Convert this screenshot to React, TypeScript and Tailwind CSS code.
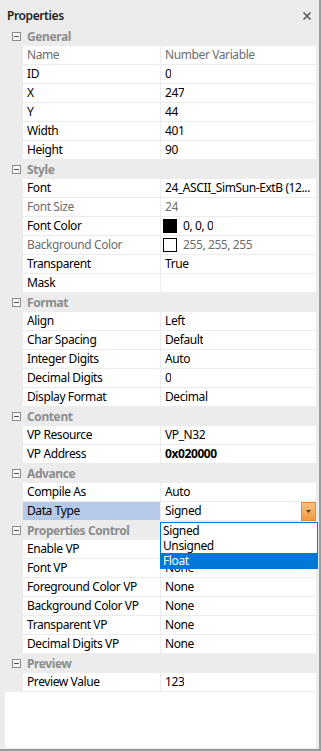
import { FC } from "react";

type Row = {
  n: string;
  v: string;
  dim?: boolean;
  bold?: boolean;
  swatch?: "black" | "white";
  selected?: boolean;
};

type Section = { title: string; rows: Row[] };

const sections: Section[] = [
  {
    title: "General",
    rows: [
      { n: "Name", v: "Number Variable", dim: true },
      { n: "ID", v: "0" },
      { n: "X", v: "247" },
      { n: "Y", v: "44" },
      { n: "Width", v: "401" },
      { n: "Height", v: "90" },
    ],
  },
  {
    title: "Style",
    rows: [
      { n: "Font", v: "24_ASCII_SimSun-ExtB (12..." },
      { n: "Font Size", v: "24", dim: true },
      { n: "Font Color", v: "0, 0, 0", swatch: "black" },
      { n: "Background Color", v: "255, 255, 255", dim: true, swatch: "white" },
      { n: "Transparent", v: "True" },
      { n: "Mask", v: "" },
    ],
  },
  {
    title: "Format",
    rows: [
      { n: "Align", v: "Left" },
      { n: "Char Spacing", v: "Default" },
      { n: "Integer Digits", v: "Auto" },
      { n: "Decimal Digits", v: "0" },
      { n: "Display Format", v: "Decimal" },
    ],
  },
  {
    title: "Content",
    rows: [
      { n: "VP Resource", v: "VP_N32" },
      { n: "VP Address", v: "0x020000", bold: true },
    ],
  },
  {
    title: "Advance",
    rows: [
      { n: "Compile As", v: "Auto" },
      { n: "Data Type", v: "Signed", selected: true },
    ],
  },
  {
    title: "Properties Control",
    rows: [
      { n: "Enable VP", v: "None" },
      { n: "Font VP", v: "None" },
      { n: "Foreground Color VP", v: "None" },
      { n: "Background Color VP", v: "None" },
      { n: "Transparent VP", v: "None" },
      { n: "Decimal Digits VP", v: "None" },
    ],
  },
  {
    title: "Preview",
    rows: [{ n: "Preview Value", v: "123" }],
  },
];

const Collapse: FC = () => (
  <svg width="9" height="9" viewBox="0 0 9 9">
    <rect x="0.5" y="0.5" width="8" height="8" fill="#f7f7f7" stroke="#8c8c8c" />
    <line x1="2" y1="4.5" x2="7" y2="4.5" stroke="#555" />
  </svg>
);

const DropList: FC = () => (
  <div className="absolute left-[-1px] top-[20px] z-10 w-[158px] border border-[#0078d7] bg-white text-black leading-[15px]">
    <div className="pl-[2px] h-[15px]">Signed</div>
    <div className="pl-[2px] h-[15px]">Unsigned</div>
    <div className="pl-[2px] h-[15px] bg-[#0078d7] text-white">Float</div>
  </div>
);

const PropRow: FC<Row> = (r) => {
  const tone = r.dim ? "text-[#6d6d6d]" : "text-black";
  return (
    <div className="flex h-[19px]">
      <div className="w-[18px] shrink-0 bg-[#ececec]" />
      <div
        className={`w-[137px] shrink-0 pl-[4px] border-b border-[#ececec] leading-[18px] whitespace-nowrap overflow-hidden ${
          r.selected ? "bg-[#b6c9e8]" : "bg-white"
        } ${tone}`}
      >
        {r.n}
      </div>
      <div className="w-[1px] shrink-0 bg-[#ececec]" />
      <div
        className={`relative flex min-w-0 flex-1 items-center border-b border-[#ececec] bg-white pl-[2px] leading-[18px] whitespace-nowrap ${tone} ${
          r.bold ? "font-bold" : ""
        }`}
      >
        {r.swatch && (
          <span
            className={`mr-[6px] h-[14px] w-[14px] shrink-0 border border-black ${
              r.swatch === "black" ? "bg-black" : "bg-white"
            }`}
          />
        )}
        <span className={`min-w-0 overflow-hidden ${r.swatch ? "" : "pl-[2px]"}`}>{r.v}</span>
        {r.selected && (
          <>
            <div className="ml-auto flex h-[19px] w-[15px] shrink-0 items-center justify-center border border-[#e88a2c] bg-gradient-to-b from-[#fcc17e] to-[#f5993f]">
              <svg width="5" height="3" viewBox="0 0 5 3">
                <path d="M0 0h5L2.5 3z" fill="#444" />
              </svg>
            </div>
            <DropList />
          </>
        )}
      </div>
    </div>
  );
};

const Category: FC<{ title: string }> = ({ title }) => (
  <div className="flex h-[19px] items-center bg-[#ececec]">
    <div className="flex w-[22px] justify-center pl-[1px]">
      <Collapse />
    </div>
    <span className="font-bold text-[#8d8d8d] leading-[18px]">{title}</span>
  </div>
);

export default function App() {
  return (
    <div className="flex h-[751px] w-[321px] flex-col border-r-2 border-b-2 border-[#9b9b9b] bg-[#ececec] font-['Noto_Sans',sans-serif] text-[12px] tracking-[-0.4px]">
      <div className="flex h-[27px] items-center justify-between pl-[7px] pr-[7px] pt-[5px]">
        <span className="font-semibold text-[#1e1e1e]">Properties</span>
        <svg width="8" height="8" viewBox="0 0 8 8" className="mr-[1px]">
          <path d="M0.5 0.5l7 7M7.5 0.5l-7 7" stroke="#555" strokeWidth="1.5" />
        </svg>
      </div>
      <div className="flex min-h-0 flex-1 pb-[1px]">
        <div className="ml-[5px] flex w-[311px] flex-col bg-white">
          {sections.map((s) => (
            <div key={s.title}>
              <Category title={s.title} />
              {s.rows.map((r) => (
                <PropRow key={r.n} {...r} />
              ))}
            </div>
          ))}
        </div>
      </div>
    </div>
  );
}
